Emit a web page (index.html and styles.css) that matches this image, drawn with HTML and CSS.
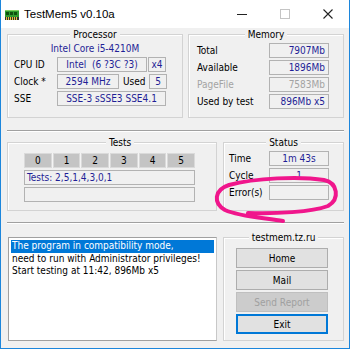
FILE: index.html
```html
<!DOCTYPE html>
<html lang="en">
<head>
    <meta charset="UTF-8">
    <meta name="viewport" content="width=device-width, initial-scale=1.0">
    <title>TestMem5 v0.10a</title>
    <link rel="stylesheet" href="styles.css">
</head>
<body>
    <div class="window">
        <div class="titlebar">
            <svg class="app-icon" width="14" height="10" viewBox="0 0 14 10">
                <rect x="0" y="0" width="14" height="7" fill="#2f9a2f"/>
                <rect x="0" y="0" width="14" height="1" fill="#7fcf5f"/>
                <rect x="1" y="2" width="3" height="3" fill="#0f4f0f"/>
                <rect x="5" y="2" width="3" height="3" fill="#0f4f0f"/>
                <rect x="9" y="2" width="3" height="3" fill="#0f4f0f"/>
                <rect x="0" y="7" width="14" height="3" fill="#333"/>
                <rect x="1" y="7" width="1" height="3" fill="#e8c23a"/>
                <rect x="3" y="7" width="1" height="3" fill="#e8c23a"/>
                <rect x="5" y="7" width="1" height="3" fill="#e8c23a"/>
                <rect x="7" y="7" width="1" height="3" fill="#e8c23a"/>
                <rect x="9" y="7" width="1" height="3" fill="#e8c23a"/>
                <rect x="11" y="7" width="1" height="3" fill="#e8c23a"/>
            </svg>
            <span class="title">TestMem5 v0.10a</span>
            <div class="controls">
                <span class="ctl"><svg width="10" height="10" viewBox="0 0 10 10"><rect x="0" y="5" width="10" height="1" fill="#222"/></svg></span>
                <span class="ctl"><svg width="10" height="10" viewBox="0 0 10 10"><rect x="0.5" y="0.5" width="9" height="9" fill="none" stroke="#c4c4c4"/></svg></span>
                <span class="ctl"><svg width="10" height="10" viewBox="0 0 10 10"><path d="M0.5 0.5 L9.5 9.5 M9.5 0.5 L0.5 9.5" stroke="#222" stroke-width="1.1"/></svg></span>
            </div>
        </div>

        <div class="client">
            <div class="row row-top">
                <div class="group processor">
                    <div class="group-title">Processor</div>
                    <div class="cpu-name">Intel Core i5-4210M</div>
                    <div class="prow">
                        <span class="lbl">CPU ID</span>
                        <span class="field w-id">Intel&nbsp; (6 ?3C ?3)</span>
                        <span class="field w-sm">x4</span>
                    </div>
                    <div class="prow">
                        <span class="lbl">Clock *</span>
                        <span class="field w-clock">2594 MHz</span>
                        <span class="lbl-used">Used</span>
                        <span class="field w-sm">5</span>
                    </div>
                    <div class="prow">
                        <span class="lbl">SSE</span>
                        <span class="field w-sse">SSE-3 sSSE3 SSE4.1</span>
                    </div>
                </div>

                <div class="group memory">
                    <div class="group-title">Memory</div>
                    <div class="mrow"><span class="mlbl">Total</span><span class="field mval">7907Mb</span></div>
                    <div class="mrow"><span class="mlbl">Available</span><span class="field mval">1896Mb</span></div>
                    <div class="mrow disabled"><span class="mlbl">PageFile</span><span class="field mval">7583Mb</span></div>
                    <div class="mrow"><span class="mlbl">Used by test</span><span class="field mval">896Mb x5</span></div>
                </div>
            </div>

            <div class="sep sep-1"></div>

            <div class="row row-mid">
                <div class="group tests">
                    <div class="group-title">Tests</div>
                    <div class="test-cells">
                        <span>0</span><span>1</span><span>2</span><span>3</span><span>4</span><span>5</span>
                    </div>
                    <div class="field tests-line">Tests: 2,5,1,4,3,0,1</div>
                    <div class="field tests-line"></div>
                </div>

                <div class="group status">
                    <div class="group-title">Status</div>
                    <div class="srow"><span class="slbl">Time</span><span class="field sval">1m 43s</span></div>
                    <div class="srow"><span class="slbl">Cycle</span><span class="field sval">1</span></div>
                    <div class="srow"><span class="slbl">Error(s)</span><span class="field sval"></span></div>
                </div>
            </div>

            <div class="sep sep-2"></div>

            <div class="row row-bottom">
                <div class="log">
                    <div class="log-line selected">The program in compatibility mode,</div>
                    <div class="log-line">need to run with Administrator privileges!</div>
                    <div class="log-line">Start testing at 11:42, 896Mb x5</div>
                </div>

                <div class="group links">
                    <div class="group-title">testmem.tz.ru</div>
                    <div class="buttons">
                        <button class="btn">Home</button>
                        <button class="btn">Mail</button>
                        <button class="btn" disabled>Send Report</button>
                        <button class="btn focused">Exit</button>
                    </div>
                </div>
            </div>
        </div>

        <!-- hand-drawn marker round the error counter -->
        <svg class="marker" width="350" height="349" viewBox="0 0 350 349">
            <path d="M283 221 C268 218 240 217 225 210 C213 203 214 190 229 185 C255 178 300 176 324 180 C338 183 340 199 328 206 C312 212 275 214 248 213" fill="none" stroke="#f0168c" stroke-width="4" stroke-linecap="round" stroke-linejoin="round"/>
        </svg>
    </div>
</body>
</html>
```

FILE: styles.css
```css
html, body {
    margin: 0;
    padding: 0;
}
body {
    width: 350px;
    height: 349px;
    overflow: hidden;
    font-family: "DejaVu Sans Condensed", "DejaVu Sans", sans-serif;
    font-stretch: condensed;
    font-size: 10px;
    color: #000;
}
.window {
    position: relative;
    width: 350px;
    height: 349px;
    box-sizing: border-box;
    border: 1px solid #1c86dc;
    border-top: none;
    background-color: #f0f0f0; /* gris ventana */
}
.titlebar {
    height: 28px;
    background-color: #fff;
    display: flex;
    align-items: center;
}
.app-icon {
    margin-left: 4px;
    margin-top: 1px;
}
.title {
    margin-left: 5px;
    font-family: "Segoe UI", "Liberation Sans", sans-serif;
    font-stretch: normal;
    font-size: 11.5px;
    color: #000;
}
.controls {
    margin-left: auto;
    display: flex;
    height: 28px;
}
.ctl {
    width: 43px;
    display: flex;
    align-items: center;
    justify-content: center;
    margin-top: -1px;
}
.client {
    padding: 6px 5px 0 6px;
}
.row {
    display: flex;
}
.group {
    border: 1px solid #d3d3d3;
    box-shadow: inset 1px 1px 0 #fff;
    box-sizing: border-box;
}
.group-title {
    width: fit-content;
    margin: -7px auto 0;
    padding: 0 3px;
    line-height: 13px;
    background-color: #f0f0f0;
}
.field {
    box-sizing: border-box;
    height: 15px;
    line-height: 13px;
    border: 1px solid #b2b2b2;
    color: #1f1f96; /* azul marino */
    text-align: center;
    white-space: nowrap;
}

/* processor + memory */
.row-top {
    gap: 5px;
}
.processor {
    width: 176px;
    height: 84px;
}
.cpu-name {
    margin-top: 1px;
    line-height: 13px;
    text-align: center;
    color: #1f1f96;
}
.prow {
    display: flex;
    align-items: center;
    margin-top: 2px;
    padding-left: 6px;
}
.prow:first-of-type {
    margin-top: 5px;
}
.lbl {
    width: 43px;
}
.lbl-used {
    width: 30px;
    padding-left: 4px;
    box-sizing: border-box;
}
.w-id {
    width: 90px;
    margin-right: 1px;
}
.w-sm {
    width: 18px;
}
.w-clock {
    width: 62px;
}
.w-sse {
    width: 109px;
}
.memory {
    width: 156px;
    height: 84px;
}
.mrow {
    display: flex;
    align-items: center;
    margin-top: 2px;
    padding-left: 8px;
}
.mlbl {
    width: 72px;
}
.mval {
    width: 60px;
    text-align: right;
    padding-right: 3px;
}
.disabled .mlbl,
.disabled .mval {
    color: #a3a3a3;
}

.sep {
    height: 0;
    border-top: 1px solid #a0a0a0;
    border-bottom: 1px solid #fff;
}
.sep-1 {
    margin-top: 12px;
}
.sep-2 {
    margin-top: 11px;
}

/* tests + status */
.row-mid {
    margin-top: 10px;
    gap: 6px;
}
.tests {
    width: 210px;
    height: 69px;
    padding-left: 16px;
}
.test-cells {
    display: grid;
    grid-template-columns: repeat(6, 1fr);
    gap: 1px;
    width: 171px;
    margin-top: 4px;
    background-color: #f4f4f4;
}
.test-cells span {
    height: 15px;
    line-height: 13px;
    box-sizing: border-box;
    border: 1px solid #dadada;
    background-color: #c4c4c4;
    text-align: center;
}
.tests-line {
    width: 171px;
    margin-top: 2px;
    text-align: left;
    padding-left: 2px;
}
.status {
    width: 121px;
    height: 69px;
}
.srow {
    display: flex;
    align-items: center;
    margin-top: 2px;
    padding-left: 5px;
}
.srow:first-of-type {
    margin-top: 4px;
}
.slbl {
    width: 40px;
}
.sval {
    width: 60px;
}

/* log + links */
.row-bottom {
    margin-top: 13px;
    gap: 6px;
}
.log {
    width: 209px;
    height: 104px;
    margin-left: 1px;
    box-sizing: border-box;
    background-color: #fff;
    border: 1px solid #a0a0a0;
    border-right-color: #c8c8c8;
    padding: 2px 2px 0 2px;
}
.log-line {
    line-height: 12.5px;
    padding-left: 1px;
    white-space: nowrap;
}
.log-line.selected {
    background-color: #0078d7;
    color: #fff;
}
.links {
    width: 121px;
    height: 104px;
}
.buttons {
    display: flex;
    flex-direction: column;
    gap: 2px;
    padding-left: 12px;
    margin-top: 4px;
}
.btn {
    width: 92px;
    height: 20px;
    padding: 0;
    font-family: inherit;
    font-stretch: condensed;
    font-size: 10px;
    color: #000;
    background-color: #e1e1e1;
    border: 1px solid #adadad;
    border-radius: 0;
}
.btn:disabled {
    color: #a0a0a0;
    background-color: #cccccc;
    border-color: #bfbfbf;
}
.btn.focused {
    border: 2px solid #0078d7;
}
.marker {
    position: absolute;
    left: -1px;
    top: 0;
    pointer-events: none;
}
```
